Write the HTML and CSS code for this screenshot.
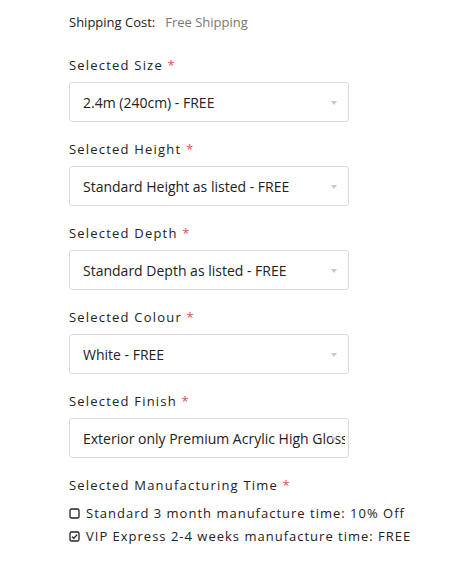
FILE: index.html
```html
<!DOCTYPE html>
<html>
<head>
<meta charset="utf-8">
<link rel="stylesheet" href="styles.css">
</head>
<body>
<div class="form">
  <div class="shipping"><span class="ship-label">Shipping Cost:</span><span class="ship-value">Free Shipping</span></div>

  <div class="field">
    <div class="label">Selected Size <span class="req">*</span></div>
    <div class="select"><span class="val">2.4m (240cm) - FREE</span></div>
  </div>
  <div class="field">
    <div class="label">Selected Height <span class="req">*</span></div>
    <div class="select"><span class="val">Standard Height as listed - FREE</span></div>
  </div>
  <div class="field">
    <div class="label">Selected Depth <span class="req">*</span></div>
    <div class="select"><span class="val">Standard Depth as listed - FREE</span></div>
  </div>
  <div class="field">
    <div class="label">Selected Colour <span class="req">*</span></div>
    <div class="select"><span class="val">White - FREE</span></div>
  </div>
  <div class="field">
    <div class="label">Selected Finish <span class="req">*</span></div>
    <div class="select"><span class="val">Exterior only Premium Acrylic High Gloss - FREE</span></div>
  </div>
  <div class="field">
    <div class="label">Selected Manufacturing Time <span class="req">*</span></div>
    <div class="options">
      <div class="option">
        <svg class="box" width="11" height="11" viewBox="0 0 11 11"><rect x="1" y="1" width="9" height="9" rx="1.5" fill="none" stroke="#222" stroke-width="1.3"/></svg>
        <span>Standard 3 month manufacture time: 10% Off</span>
      </div>
      <div class="option">
        <svg class="box" width="11" height="11" viewBox="0 0 11 11"><rect x="1" y="1" width="9" height="9" rx="1.5" fill="none" stroke="#222" stroke-width="1.3"/><path d="M3 5.6 L4.8 7.3 L8.2 3.6" fill="none" stroke="#222" stroke-width="1.3"/></svg>
        <span>VIP Express 2-4 weeks manufacture time: FREE</span>
      </div>
    </div>
  </div>
</div>
</body>
</html>
```

FILE: styles.css
```css
html, body {
  margin: 0;
  padding: 0;
  background: #fff;
}
body {
  font-family: "Open Sans", "Liberation Sans", sans-serif;
  color: #222;
}
.form {
  padding: 13px 0 0 69px;
  width: 380px;
}
.shipping {
  font-size: 13px;
  line-height: 18px;
  margin-bottom: 25px;
  display: flex;
  gap: 10px;
}
.ship-label {
  color: #222;
}
.ship-value {
  color: #777;
}
.field {
  margin-bottom: 18px;
}
.label {
  font-size: 13px;
  line-height: 18px;
  letter-spacing: 1.2px;
  margin-bottom: 8px;
  color: #222;
}
.req {
  color: #d9534f;
}
.select {
  position: relative;
  box-sizing: border-box;
  width: 280px;
  height: 40px;
  border: 1px solid #dcdcdc;
  border-radius: 3px;
  padding: 0 0 0 13px;
  font-size: 14px;
  line-height: 39px;
  white-space: nowrap;
  overflow: hidden;
  color: #222;
}
.select::after {
  content: "";
  position: absolute;
  right: 11px;
  top: 18px;
  width: 0;
  height: 0;
  border-left: 3.5px solid transparent;
  border-right: 3.5px solid transparent;
  border-top: 4px solid #c8c8c8;
}
.select .val {
  display: block;
  overflow: hidden;
  margin-right: 3px;
}
.options {
  display: flex;
  flex-direction: column;
  margin-top: 1px;
}
.option {
  display: flex;
  align-items: center;
  gap: 6px;
  font-size: 13px;
  line-height: 23px;
  letter-spacing: 1px;
}
.box {
  flex: none;
}
```
